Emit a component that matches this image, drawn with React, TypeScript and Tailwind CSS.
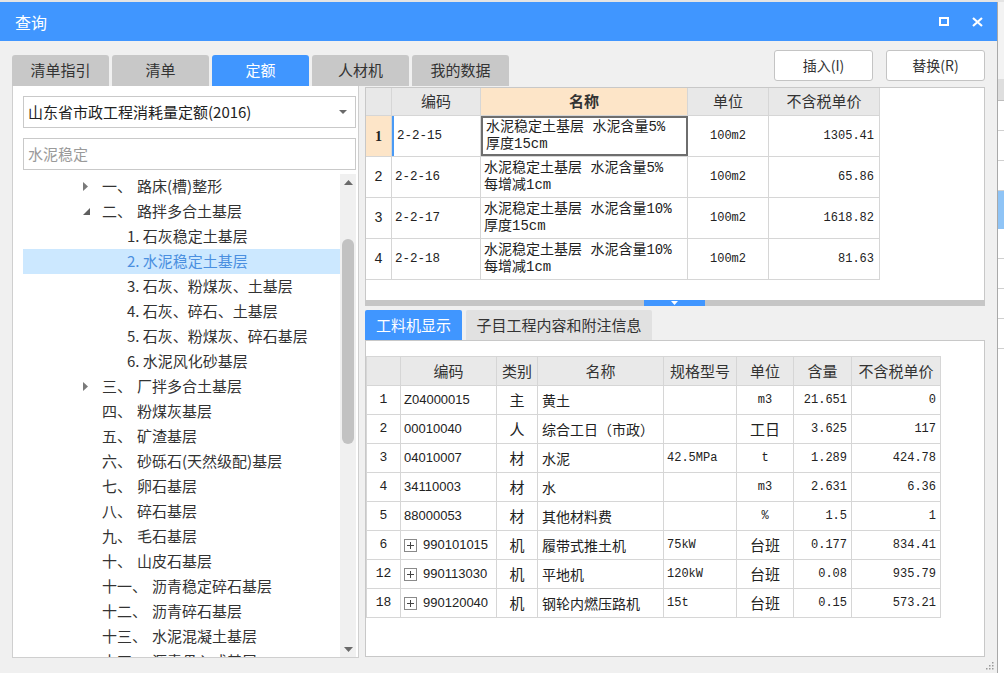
import React from 'react';

const CJK = "font-['Noto_Sans_CJK_SC',sans-serif]";
const MONO = "font-['Liberation_Mono','Noto_Sans_CJK_SC',monospace]";
const SANS = "font-['Liberation_Sans','Noto_Sans_CJK_SC',sans-serif]";

type TreeRow = { lv: 1 | 2; arrow?: 'right' | 'down'; num?: string; text: string; sel?: boolean };

const tree: TreeRow[] = [
    { lv: 1, arrow: 'right', num: '一', text: '路床(槽)整形' },
    { lv: 1, arrow: 'down', num: '二', text: '路拌多合土基层' },
    { lv: 2, text: '1. 石灰稳定土基层' },
    { lv: 2, text: '2. 水泥稳定土基层', sel: true },
    { lv: 2, text: '3. 石灰、粉煤灰、土基层' },
    { lv: 2, text: '4. 石灰、碎石、土基层' },
    { lv: 2, text: '5. 石灰、粉煤灰、碎石基层' },
    { lv: 2, text: '6. 水泥风化砂基层' },
    { lv: 1, arrow: 'right', num: '三', text: '厂拌多合土基层' },
    { lv: 1, num: '四', text: '粉煤灰基层' },
    { lv: 1, num: '五', text: '矿渣基层' },
    { lv: 1, num: '六', text: '砂砾石(天然级配)基层' },
    { lv: 1, num: '七', text: '卵石基层' },
    { lv: 1, num: '八', text: '碎石基层' },
    { lv: 1, num: '九', text: '毛石基层' },
    { lv: 1, num: '十', text: '山皮石基层' },
    { lv: 1, num: '十一', text: '沥青稳定碎石基层' },
    { lv: 1, num: '十二', text: '沥青碎石基层' },
    { lv: 1, num: '十三', text: '水泥混凝土基层' },
    { lv: 1, num: '十四', text: '沥青贯入式基层' },
];

const quotas = [
    { n: '1', code: '2-2-15', l1: '水泥稳定土基层 水泥含量5%', l2: '厚度15cm', price: '1305.41' },
    { n: '2', code: '2-2-16', l1: '水泥稳定土基层 水泥含量5%', l2: '每增减1cm', price: '65.86' },
    { n: '3', code: '2-2-17', l1: '水泥稳定土基层 水泥含量10%', l2: '厚度15cm', price: '1618.82' },
    { n: '4', code: '2-2-18', l1: '水泥稳定土基层 水泥含量10%', l2: '每增减1cm', price: '81.63' },
];

const materials = [
    { n: '1', code: 'Z04000015', type: '主', name: '黄土', spec: '', unit: 'm3', qty: '21.651', price: '0' },
    { n: '2', code: '00010040', type: '人', name: '综合工日（市政）', spec: '', unit: '工日', qty: '3.625', price: '117' },
    { n: '3', code: '04010007', type: '材', name: '水泥', spec: '42.5MPa', unit: 't', qty: '1.289', price: '424.78' },
    { n: '4', code: '34110003', type: '材', name: '水', spec: '', unit: 'm3', qty: '2.631', price: '6.36' },
    { n: '5', code: '88000053', type: '材', name: '其他材料费', spec: '', unit: '%', qty: '1.5', price: '1' },
    { n: '6', plus: true, code: '990101015', type: '机', name: '履带式推土机', spec: '75kW', unit: '台班', qty: '0.177', price: '834.41' },
    { n: '12', plus: true, code: '990113030', type: '机', name: '平地机', spec: '120kW', unit: '台班', qty: '0.08', price: '935.79' },
    { n: '18', plus: true, code: '990120040', type: '机', name: '钢轮内燃压路机', spec: '15t', unit: '台班', qty: '0.15', price: '573.21' },
];

const isCjk = (s: string) => /[\u4e00-\u9fff]/.test(s);

function TreeArrow({ dir }: { dir: 'right' | 'down' }) {
    if (dir === 'right') {
        return (
            <svg width="5" height="9" viewBox="0 0 5 9">
                <path d="M0 0 L5 4.5 L0 9 Z" fill="#7a7a7a" />
            </svg>
        );
    }
    return (
        <svg width="7" height="7" viewBox="0 0 7 7">
            <path d="M7 0 L7 7 L0 7 Z" fill="#5f5f5f" />
        </svg>
    );
}

function LeftPanel() {
    return (
        <div className="w-[347px] h-[572px] bg-white border border-[#cfcfcf] border-t-0 flex flex-col pt-[10px] pl-[10px] pr-[2px]">
            <div className={`h-[32px] border border-[#c9c9c9] flex items-center justify-between pl-[4px] pr-[8px] text-[15px] text-[#222] ${CJK}`}>
                <span>山东省市政工程消耗量定额(2016)</span>
                <svg width="8" height="4" viewBox="0 0 8 4">
                    <path d="M0 0 L8 0 L4 4 Z" fill="#6a6a6a" />
                </svg>
            </div>
            <div className={`mt-[10px] h-[32px] border border-[#c9c9c9] flex items-center pl-[4px] text-[15px] text-[#9a9a9a] ${CJK}`}>
                水泥稳定
            </div>
            <div className="mt-[4px] flex-1 flex overflow-hidden">
                <div className="flex-1 overflow-hidden">
                    {tree.map((r, i) => (
                        <div
                            key={i}
                            className={`h-[25px] flex items-center whitespace-nowrap text-[15px] ${CJK} ${r.sel ? 'bg-[#cce8ff] text-[#4a8fe0]' : 'text-[#333]'}`}
                        >
                            {r.lv === 1 ? (
                                <>
                                    <div className="w-[79px] pl-[60px] flex items-center">
                                        {r.arrow && <TreeArrow dir={r.arrow} />}
                                    </div>
                                    <span>{r.num}、</span>
                                    <span className="ml-[5px]">{r.text}</span>
                                </>
                            ) : (
                                <span className="pl-[104px]">{r.text}</span>
                            )}
                        </div>
                    ))}
                </div>
                <div className="w-[16px] bg-[#f0f0f0] flex flex-col items-center">
                    <div className="h-[16px] flex items-center justify-center">
                        <svg width="9" height="5" viewBox="0 0 9 5">
                            <path d="M0 5 L4.5 0 L9 5 Z" fill="#6a6a6a" />
                        </svg>
                    </div>
                    <div className="mt-[49px] w-[12px] h-[205px] rounded-full bg-[#c2c2c2]" />
                    <div className="flex-1" />
                    <div className="h-[16px] flex items-center justify-center">
                        <svg width="9" height="5" viewBox="0 0 9 5">
                            <path d="M0 0 L9 0 L4.5 5 Z" fill="#6a6a6a" />
                        </svg>
                    </div>
                </div>
            </div>
        </div>
    );
}

function QuotaTable() {
    return (
        <div className="h-[213px] bg-white border border-[#c8c8c8] border-b-0">
            <div className="w-[514px]">
                <div className={`h-[28px] flex border-b border-[#d6d6d6] text-[15px] text-[#333] ${CJK}`}>
                    <div className="w-[26px] bg-[#e8e8e8] border-r border-[#d6d6d6]" />
                    <div className="w-[89px] bg-[#e8e8e8] border-r border-[#d6d6d6] flex items-center justify-center">编码</div>
                    <div className="w-[207px] bg-[#fde5c8] border-r border-[#d6d6d6] flex items-center justify-center font-bold">名称</div>
                    <div className="w-[81px] bg-[#e8e8e8] border-r border-[#d6d6d6] flex items-center justify-center">单位</div>
                    <div className="w-[111px] bg-[#e8e8e8] border-r border-[#d6d6d6] flex items-center justify-center">不含税单价</div>
                </div>
                {quotas.map((q, i) => (
                    <div key={q.n} className="h-[41px] flex border-b border-[#d6d6d6] text-[#222]">
                        <div
                            className={`w-[26px] border-r border-[#d6d6d6] flex items-center justify-center text-[14px] ${i === 0 ? "bg-[#fde5c8] font-bold font-['Liberation_Serif',serif]" : MONO}`}
                        >
                            {q.n}
                        </div>
                        <div
                            className={`w-[89px] border-r border-[#d6d6d6] flex items-center pl-[3px] text-[12.5px] ${MONO} ${i === 0 ? 'border-l-2 border-l-[#4a9af5]' : ''}`}
                        >
                            {q.code}
                        </div>
                        <div
                            className={`w-[207px] flex flex-col justify-center pl-[3px] text-[14px] leading-[17px] whitespace-nowrap ${MONO} ${i === 0 ? 'border-2 border-[#6e6e6e]' : 'border-r border-[#d6d6d6]'}`}
                        >
                            <span>{q.l1}</span>
                            <span>{q.l2}</span>
                        </div>
                        <div className={`w-[81px] border-r border-[#d6d6d6] flex items-center justify-center text-[12px] ${MONO}`}>100m2</div>
                        <div className={`w-[111px] border-r border-[#d6d6d6] flex items-center justify-end pr-[5px] text-[12px] ${MONO}`}>{q.price}</div>
                    </div>
                ))}
            </div>
        </div>
    );
}

const matCols = ['w-[34px]', 'w-[96px]', 'w-[41px]', 'w-[126px]', 'w-[73px]', 'w-[57px]', 'w-[58px]', 'w-[89px]'];
const matHeads = ['', '编码', '类别', '名称', '规格型号', '单位', '含量', '不含税单价'];

function PlusBox() {
    return (
        <svg width="13" height="13" viewBox="0 0 13 13" className="shrink-0">
            <rect x="0.5" y="0.5" width="12" height="12" fill="white" stroke="#8a8a8a" />
            <path d="M3 6.5 H10 M6.5 3 V10" stroke="#444" strokeWidth="1" />
        </svg>
    );
}

function MaterialTable() {
    return (
        <div className="h-[317px] bg-white border border-[#c8c8c8] pt-[15px]">
            <div className="w-[575px] border-l border-[#d6d6d6]">
                <div className={`h-[30px] flex border-t border-b border-[#d6d6d6] bg-[#e9e9e9] text-[15px] text-[#333] ${CJK}`}>
                    {matHeads.map((h, i) => (
                        <div key={i} className={`${matCols[i]} border-r border-[#d6d6d6] flex items-center justify-center`}>
                            {h}
                        </div>
                    ))}
                </div>
                {materials.map((m) => (
                    <div key={m.n} className="h-[29px] flex border-b border-[#d6d6d6] text-[#222]">
                        <div className={`w-[34px] border-r border-[#d6d6d6] flex items-center justify-center text-[13px] ${MONO}`}>{m.n}</div>
                        <div className={`w-[96px] border-r border-[#d6d6d6] flex items-center pl-[3px] text-[13px] ${SANS}`}>
                            {m.plus && <PlusBox />}
                            <span className={m.plus ? 'ml-[6px]' : ''}>{m.code}</span>
                        </div>
                        <div className={`w-[41px] border-r border-[#d6d6d6] flex items-center justify-center text-[15px] ${CJK}`}>{m.type}</div>
                        <div className={`w-[126px] border-r border-[#d6d6d6] flex items-center pl-[4px] text-[14px] whitespace-nowrap ${CJK}`}>{m.name}</div>
                        <div className={`w-[73px] border-r border-[#d6d6d6] flex items-center pl-[3px] text-[12px] ${MONO}`}>{m.spec}</div>
                        <div
                            className={`w-[57px] border-r border-[#d6d6d6] flex items-center justify-center ${isCjk(m.unit) ? `text-[15px] ${CJK}` : `text-[12px] ${MONO}`}`}
                        >
                            {m.unit}
                        </div>
                        <div className={`w-[58px] border-r border-[#d6d6d6] flex items-center justify-end pr-[4px] text-[12px] ${MONO}`}>{m.qty}</div>
                        <div className={`w-[89px] border-r border-[#d6d6d6] flex items-center justify-end pr-[4px] text-[12px] ${MONO}`}>{m.price}</div>
                    </div>
                ))}
            </div>
        </div>
    );
}

export default function App() {
    const tabs = ['清单指引', '清单', '定额', '人材机', '我的数据'];

    return (
        <div className="w-[1004px] h-[673px] flex overflow-hidden bg-[#e4e4e4] pt-[2px]">
            <div className="relative w-[998px] flex flex-col bg-[#f0f0f0] border-r border-[#a9a9a9]">
                {/* title bar */}
                <div className={`h-[39px] bg-[#4096ff] flex items-center justify-between pl-[15px] pr-[14px] text-white text-[16px] ${CJK}`}>
                    <span>查询</span>
                    <div className="flex items-center gap-[23px]">
                        <svg width="10" height="9" viewBox="0 0 10 9">
                            <rect x="1" y="1" width="8" height="7" fill="none" stroke="white" strokeWidth="2" />
                        </svg>
                        <svg width="11" height="10" viewBox="0 0 11 10">
                            <path d="M1 1 L10 9 M10 1 L1 9" stroke="white" strokeWidth="2.2" />
                        </svg>
                    </div>
                </div>

                <div className="px-[12px] flex flex-col">
                    {/* tabs + action buttons */}
                    <div className="h-[45px] flex justify-between">
                        <div className="self-end flex gap-[3px]">
                            {tabs.map((t) => (
                                <div
                                    key={t}
                                    className={`w-[97px] h-[31px] rounded-t-[3px] flex items-center justify-center text-[15px] ${CJK} ${t === '定额' ? 'bg-[#4096ff] text-white' : 'bg-[#c8c8c8] text-[#333]'}`}
                                >
                                    {t}
                                </div>
                            ))}
                        </div>
                        <div className="mt-[9px] flex gap-[13px]">
                            {['插入(I)', '替换(R)'].map((b) => (
                                <button
                                    key={b}
                                    className={`w-[99px] h-[31px] bg-white border border-[#c4c4c4] rounded-[3px] text-[14px] text-[#333] ${CJK}`}
                                >
                                    {b}
                                </button>
                            ))}
                        </div>
                    </div>

                    <div className="flex gap-[6px]">
                        <LeftPanel />

                        <div className="w-[620px] mt-[1px] flex flex-col">
                            <QuotaTable />

                            {/* splitter */}
                            <div className="h-[6px] bg-[#c6c6c6] flex">
                                <div className="w-[279px]" />
                                <div className="w-[61px] bg-[#4096ff] flex justify-center pt-[1px]">
                                    <svg width="7" height="4" viewBox="0 0 7 4">
                                        <path d="M0 0 L7 0 L3.5 4 Z" fill="white" />
                                    </svg>
                                </div>
                            </div>

                            <div className={`mt-[4px] h-[30px] flex gap-[4px] text-[15px] ${CJK}`}>
                                <div className="w-[97px] rounded-t-[2px] bg-[#4096ff] text-white flex items-center justify-center">工料机显示</div>
                                <div className="w-[186px] rounded-t-[2px] bg-[#e1e1e1] text-[#333] flex items-center justify-center">子目工程内容和附注信息</div>
                            </div>

                            <MaterialTable />
                        </div>
                    </div>
                </div>

                {/* resize grip */}
                <div className="absolute right-[3px] bottom-[3px]">
                    <svg width="9" height="9" viewBox="0 0 9 9">
                        {[[7, 1], [7, 4], [4, 4], [7, 7], [4, 7], [1, 7]].map(([x, y], i) => (
                            <rect key={i} x={x} y={y} width="1.5" height="1.5" fill="#9a9a9a" />
                        ))}
                    </svg>
                </div>
            </div>

            {/* application behind the dialog */}
            <div className="flex-1 bg-white flex flex-col">
                <div className="h-[77px] bg-[#f3f3f3]" />
                <div className="h-[22px] bg-[#dedede] border-b border-[#bdbdbd]" />
                <div className="h-[30px] border-b border-[#d0d0d0]" />
                <div className="h-[30px] border-b border-[#d0d0d0]" />
                <div className="h-[30px] border-b border-[#d0d0d0]" />
                <div className="h-[38px] bg-[#8fc4f6]" />
                <div className="h-[30px] border-b border-[#d0d0d0]" />
                <div className="h-[30px] border-b border-[#d0d0d0]" />
                <div className="h-[30px] border-b border-[#d0d0d0]" />
                <div className="h-[30px] border-b border-[#d0d0d0]" />
            </div>
        </div>
    );
}
